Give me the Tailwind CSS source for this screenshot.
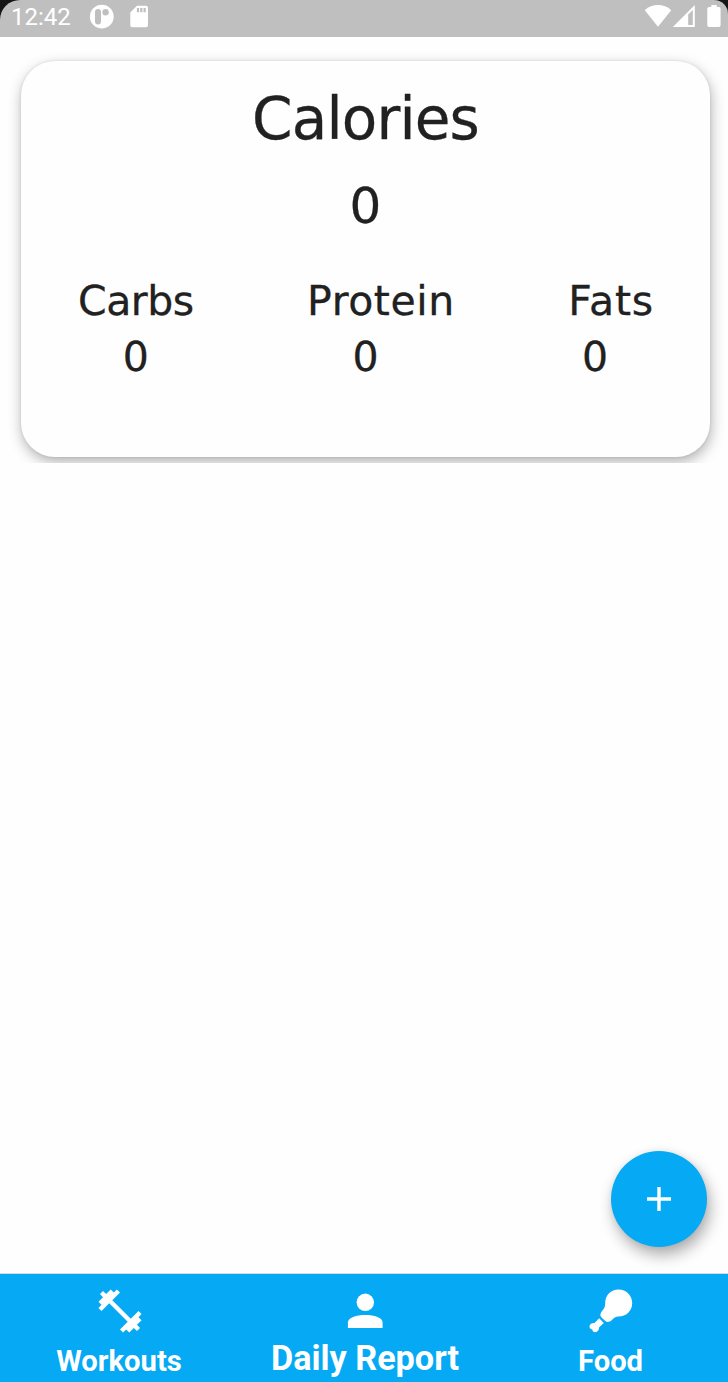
<!DOCTYPE html>
<html lang="en">
<head>
<meta charset="utf-8">
<title>Daily Report</title>
<script src="https://cdn.jsdelivr.net/npm/@tailwindcss/browser@4"></script>
</head>
<body class="bg-[#fefefe]">
<div class="relative flex flex-col w-[728px] h-[1382px] overflow-hidden bg-[#fefefe]">
  <div class="bg-[#151515] h-[37px] shrink-0">
    <header class="h-[37px] bg-[#bfbfbf] rounded-tl-[20px] rounded-tr-[14px] flex items-start text-white">
      <span class="font-['Roboto',sans-serif] text-[24px] leading-[34px] w-[60px] ml-[11px] whitespace-nowrap">12:42</span>
      <svg class="ml-[18px] mt-[4px]" width="26" height="26" viewBox="0 0 26 26"><circle cx="12.800" cy="12.700" r="11.900" fill="#fff"/><rect x="6" y="5" width="6" height="15.400" rx="3" fill="#bfbfbf"/><circle cx="16.600" cy="8.300" r="3.200" fill="#bfbfbf"/></svg>
      <svg class="ml-[15px] mt-[5px]" width="19" height="24" viewBox="0 0 19 24"><path d="M7 .8h9a2 2 0 0 1 2 2v17.500a2 2 0 0 1-2 2H2.300a2 2 0 0 1-2-2V7.500z" fill="#fff"/><path d="M8 3v4.300M11.300 3v4.300M14.600 3v4.300" stroke="#bfbfbf" stroke-width="2.200"/></svg>
      <svg class="ml-auto mt-[4px]" width="28" height="24" viewBox="0 0 28 24"><path d="M.8 6.200C8-.6 20-.6 27.200 6.200L14 22.700z" fill="#fff"/></svg>
      <svg class="mt-[4px]" width="24" height="24" viewBox="0 0 24 24"><path d="M.8 23 22.800 1v22z" fill="#fff"/><path d="M16.200 10.500 20.800 6v15h-4.600z" fill="#bfbfbf"/></svg>
      <svg class="ml-[11px] mr-[7px] mt-[4px]" width="14" height="24" viewBox="0 0 14 24"><path d="M4.300 1h5.400v2h2.200a1.700 1.700 0 0 1 1.700 1.700v16.600a1.700 1.700 0 0 1-1.700 1.700H2a1.700 1.700 0 0 1-1.700-1.700V4.700A1.700 1.700 0 0 1 2 3h2.300z" fill="#fff"/></svg>
    </header>
  </div>

  <main class="flex-1 text-[#212121] font-['DejaVu_Sans',sans-serif] [-webkit-text-stroke:0.3px_#212121]">
    <div class="h-[426px] overflow-hidden pt-[24px] pl-[21px]">
      <section class="w-[689px] h-[396px] rounded-[34px] bg-[#fefefe] shadow-[1px_5px_14px_rgba(0,0,0,0.3),0_0_3px_rgba(0,0,0,0.1)] flex flex-col">
        <h1 class="mt-[23px] h-[70px] leading-[70px] text-[58px] text-center tracking-[-0.8px]">Calories</h1>
        <div class="mt-[20px] h-[64px] leading-[64px] text-[50px] text-center">0</div>
        <div class="mt-[35px] grid grid-cols-3 text-center">
          <div>
            <div class="h-[56px] leading-[56px] text-[41px] tracking-[-0.5px]">Carbs</div>
            <div class="h-[56px] leading-[56px] text-[41px]">0</div>
          </div>
          <div>
            <div class="h-[56px] leading-[56px] text-[41px] tracking-[0.6px] pl-[31px]">Protein</div>
            <div class="h-[56px] leading-[56px] text-[41px]">0</div>
          </div>
          <div>
            <div class="h-[56px] leading-[56px] text-[41px] tracking-[0.8px] pl-[32px]">Fats</div>
            <div class="h-[56px] leading-[56px] text-[41px]">0</div>
          </div>
        </div>
      </section>
    </div>
  </main>

  <button aria-label="Add" class="absolute left-[611px] top-[1150.500px] size-[96px] rounded-full bg-[#05a9f4] grid place-items-center shadow-[3px_8px_15px_rgba(0,0,0,0.32),0_0_6px_rgba(0,0,0,0.06)]">
    <svg width="24" height="24" viewBox="0 0 24 24"><path d="M12 0v24M0 12h24" stroke="#fff" stroke-width="3.400"/></svg>
  </button>

  <nav class="h-[109px] shrink-0 bg-[#05a9f4] border-t border-[#cfdce2] flex text-white font-bold font-['Roboto',sans-serif] text-center">
    <div class="w-[238px] flex flex-col items-center">
      <svg class="mt-[15px] ml-[2px]" width="44" height="44" viewBox="1.800 1.800 20.400 20.400" fill="#fff"><path d="M20.570 14.860 22 13.430 20.570 12 17 15.570 8.430 7 12 3.430 10.570 2 9.140 3.430 7.710 2 5.570 4.140 4.140 2.710 2.710 4.140 4.140 5.570 2 7.710 3.430 9.140 2 10.570 3.430 12 7 8.430 15.570 17 12 20.570 13.430 22 14.860 20.570 16.290 22 18.430 19.860 19.860 21.290 21.290 19.860 19.860 18.430 22 16.290z"/></svg>
      <span class="mt-[10px] leading-[36px] text-[29.200px]">Workouts</span>
    </div>
    <div class="w-[254px] flex flex-col items-center">
      <svg class="mt-[19px]" width="36" height="36" viewBox="0 0 36 36" fill="#fff"><circle cx="18.300" cy="9.300" r="8.700"/><path d="M.9 35v-5.500C.9 24.500 9.300 22 18.300 22s17.300 2.500 17.300 7.500V35z"/></svg>
      <span class="mt-[9px] leading-[40px] text-[34.200px] whitespace-nowrap">Daily Report</span>
    </div>
    <div class="w-[236px] flex flex-col items-center">
      <svg class="mt-[15px] ml-[2px]" width="44" height="44" viewBox="0 0 44 44" fill="#fff"><path d="M29.500 .5C37.500 .5 43.200 6.800 43.200 14c0 8-6 13.600-13.700 13.600-3 0-4.400 1.300-6.600 3.500-3.400 3.200-7 2-9.300-.3s-3.300-5.900-.4-9.100c2.300-2.500 3-4 3-7.700C16.200 6.200 22 .5 29.500 .5z"/><path d="M10.200 29.300 14.800 33.900 10.200 38.200C10 41 8.600 43.200 6.200 43.200 4.200 43.200 3.500 41.800 3.300 40.400 1.800 40.200.5 39.300.5 37.400.5 34.800 3.400 33.700 5.500 34z"/><path d="M9.500 26.500 17.500 34" stroke="#05a9f4" stroke-width="1.200"/></svg>
      <span class="mt-[10px] ml-[1px] leading-[36px] text-[29.200px]">Food</span>
    </div>
  </nav>
</div>
</body>
</html>
